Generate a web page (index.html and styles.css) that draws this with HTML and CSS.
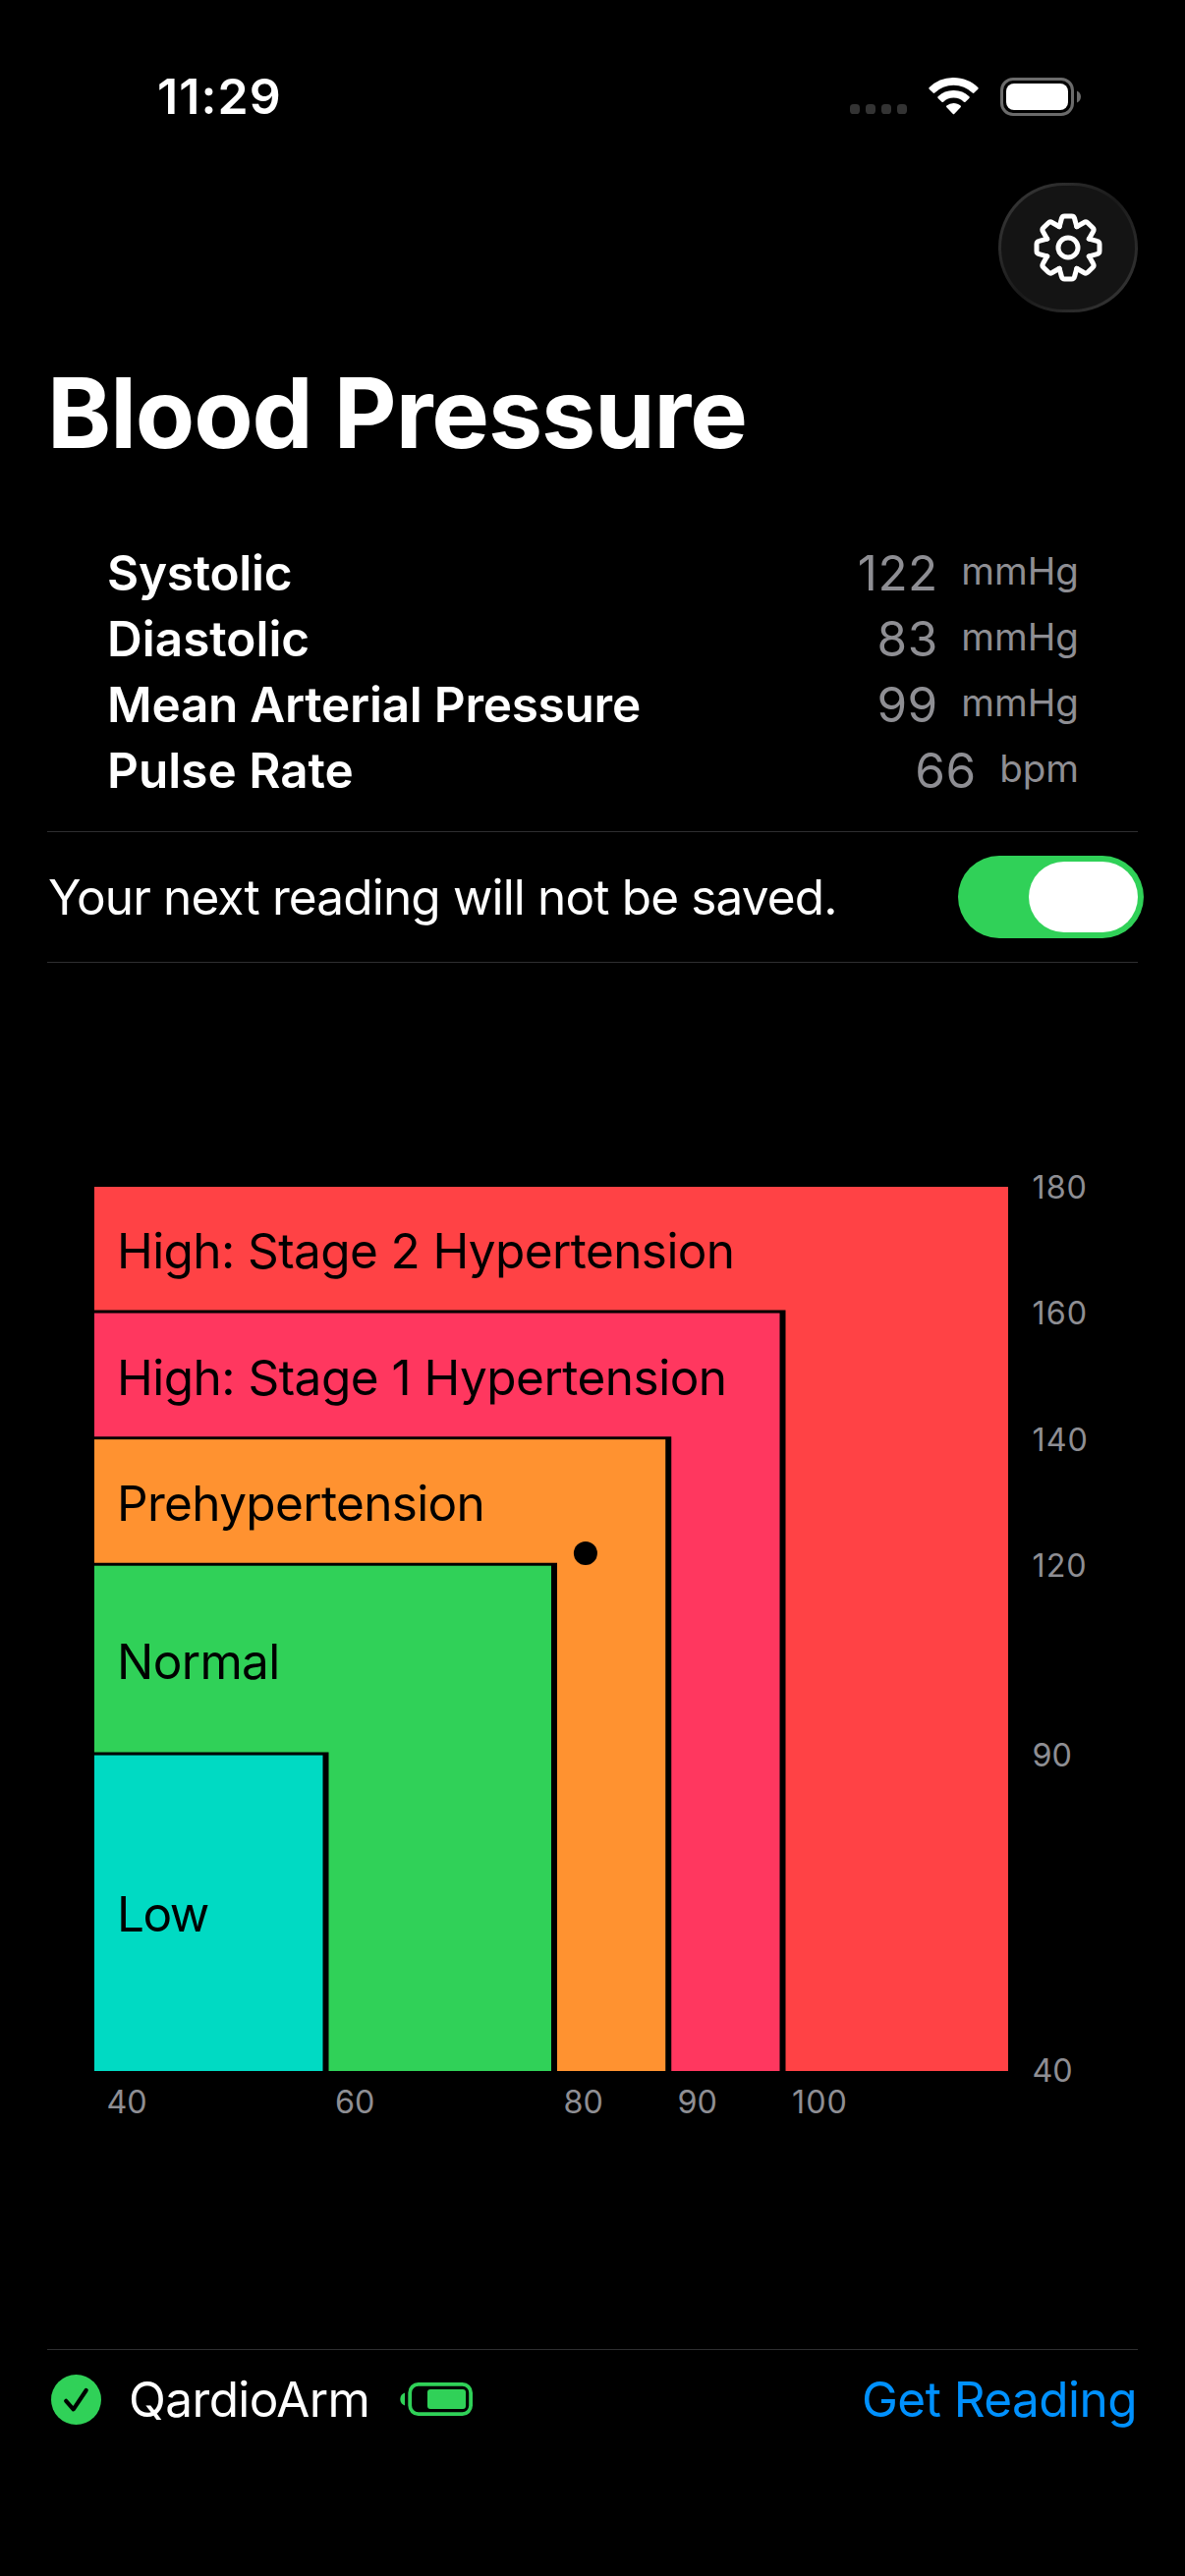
FILE: index.html
```html
<!DOCTYPE html>
<html lang="en">
<head>
<meta charset="utf-8">
<title>Blood Pressure</title>
<link rel="stylesheet" href="styles.css">
</head>
<body>
<div class="screen">
  <header class="status-bar">
    <span class="time">11:29</span>
    <div class="indicators">
      <svg class="signal" width="58" height="38" viewBox="0 0 58 38" fill="#333"><rect x="0" y="27" width="10" height="10" rx="3.6"/><rect x="16" y="27" width="10" height="10" rx="3.6"/><rect x="32" y="27" width="10" height="10" rx="3.6"/><rect x="48" y="27" width="10" height="10" rx="3.6"/></svg>
      <svg class="wifi" width="51" height="38" viewBox="0 0 51 38" fill="#fff"><path d="M25.500 0C35.200 0 44.100 3.800 50.300 10a1.200 1.200 0 0 1 0 1.700L46.400 15.600a1.200 1.200 0 0 1-1.700 0A27.400 27.400 0 0 0 6.300 15.600a1.200 1.200 0 0 1-1.700 0L.7 11.700a1.200 1.200 0 0 1 0-1.700A35 35 0 0 1 25.500 0Z"/><path d="M25.500 13A22.500 22.500 0 0 1 41.400 19.200a1.200 1.200 0 0 1 0 1.700L37.500 24.700a1.200 1.200 0 0 1-1.600 0 15.200 15.200 0 0 0-20.800 0 1.200 1.200 0 0 1-1.600 0L9.600 20.900a1.200 1.200 0 0 1 0-1.700A22.500 22.500 0 0 1 25.500 13Z"/><path d="M25.500 26c2.700 0 5.200 1 7.100 2.600a1.200 1.200 0 0 1 0 1.700L26.400 36.700a1.200 1.200 0 0 1-1.800 0L18.400 30.300a1.200 1.200 0 0 1 0-1.700A11 11 0 0 1 25.500 26Z"/></svg>
      <svg class="battery" width="83" height="39" viewBox="0 0 83 39"><rect x="1.500" y="1.500" width="72" height="36" rx="11.500" fill="none" stroke="#6b6b6b" stroke-width="3"/><rect x="6" y="6" width="63" height="27" rx="8" fill="#fff"/><path d="M78 13.500c2.400 1 4 3.300 4 6s-1.600 5-4 6z" fill="#6b6b6b"/></svg>
    </div>
  </header>
  <div class="toolbar">
    <button class="settings" aria-label="Settings">
      <svg width="72" height="72" viewBox="-36 -36 72 72" fill="none" stroke="#fff" stroke-width="5" stroke-linecap="round" stroke-linejoin="round">
        <defs><path id="tooth" d="M-8.800-21.300-6.600-29.500Q-6-32-3.500-32H3.500Q6-32 6.600-29.500L8.800-21.300"/></defs>
        <use href="#tooth"/><use href="#tooth" transform="rotate(45)"/><use href="#tooth" transform="rotate(90)"/><use href="#tooth" transform="rotate(135)"/><use href="#tooth" transform="rotate(180)"/><use href="#tooth" transform="rotate(225)"/><use href="#tooth" transform="rotate(270)"/><use href="#tooth" transform="rotate(315)"/>
        <circle r="10"/>
      </svg>
    </button>
  </div>
  <h1 class="title">Blood Pressure</h1>
  <dl class="vitals">
    <div class="vital"><dt class="tight">Systolic</dt><dd><span class="value">122</span><span class="unit">mmHg</span></dd></div>
    <div class="vital"><dt>Diastolic</dt><dd><span class="value">83</span><span class="unit">mmHg</span></dd></div>
    <div class="vital"><dt class="tight">Mean Arterial Pressure</dt><dd><span class="value">99</span><span class="unit">mmHg</span></dd></div>
    <div class="vital"><dt>Pulse Rate</dt><dd><span class="value">66</span><span class="unit">bpm</span></dd></div>
  </dl>
  <div class="save-row">
    <span class="notice">Your next reading will not be saved.</span>
    <span class="switch" role="switch" aria-checked="true"><span class="knob"></span></span>
  </div>
  <svg class="chart" width="1110" height="1000" viewBox="0 0 1110 1000">
    <g transform="translate(48 28)">
      <rect class="stage2" width="930" height="900"/>
      <path class="edge" d="M0 125.570H703.500V900H0z"/><rect class="stage1" y="128.570" width="697.500" height="771.430"/>
      <path class="edge" d="M0 254.140H587.250V900H0z"/><rect class="pre" y="257.140" width="581.250" height="642.860"/>
      <path class="edge" d="M0 382.710H471V900H0z"/><rect class="normal" y="385.710" width="465" height="514.290"/>
      <path class="edge" d="M0 575.570H238.500V900H0z"/><rect class="low" y="578.570" width="232.500" height="321.430"/>
      <circle cx="499.900" cy="372.900" r="12"/>
      <g class="zone">
        <text class="zone-stage2" x="23" y="82.800">High: Stage 2 Hypertension</text>
        <text class="zone-stage1" x="23" y="211.500">High: Stage 1 Hypertension</text>
        <text x="23" y="340">Prehypertension</text>
        <text x="23" y="500.600">Normal</text>
        <text class="zone-low" x="23" y="758">Low</text>
      </g>
      <g class="axis">
        <text class="wide" x="954.500" y="11.500">180</text><text class="wide" x="954.500" y="140">160</text><text class="wide" x="954.500" y="268.600">140</text><text class="wide" x="954.500" y="397">120</text><text x="954.500" y="590">90</text><text x="954.500" y="911">40</text>
        <text x="12.500" y="943">40</text><text x="245" y="943">60</text><text x="477.500" y="943">80</text><text x="593.500" y="943">90</text><text class="wide" x="710" y="943">100</text>
      </g>
    </g>
  </svg>
  <footer class="device-bar">
    <svg class="check" width="51" height="51" viewBox="0 0 51 51"><circle cx="25.500" cy="25.500" r="25.500" fill="#30d158"/><path d="M15.200 26.800 22.700 35.300 35.700 16" fill="none" stroke="#000" stroke-width="4.200" stroke-linecap="round" stroke-linejoin="round"/></svg>
    <span class="device">QardioArm</span>
    <svg class="arm-battery" width="75" height="34" viewBox="0 0 75 34"><path d="M5 10.500C2.200 11.300.3 13.800.3 17s1.900 5.700 4.700 6.500z" fill="#30d158"/><rect x="10.200" y="1.900" width="61.900" height="30.200" rx="8.500" fill="none" stroke="#30d158" stroke-width="3.800"/><rect x="28" y="7" width="39" height="20" rx="3" fill="#30d158"/></svg>
    <a class="action" href="#">Get Reading</a>
  </footer>
</div>
</body>
</html>
```
FILE: styles.css
```css
* { box-sizing: border-box; }
body { margin: 0; background: #000; color: #fff; font-family: Inter, "Liberation Sans", sans-serif; font-size: 49.5px; }
.screen { width: 1206px; height: 2622px; padding: 62px 48px 0; display: flex; flex-direction: column; }
.status-bar { height: 72px; flex: none; display: flex; align-items: center; justify-content: space-between; padding: 0 57px 0 112px; }
.time { font-size: 50px; font-weight: 600; line-height: 72px; letter-spacing: 1.1px; }
.indicators { display: flex; align-items: center; }
.wifi { margin-left: 22px; }
.battery { margin-left: 22px; }
.toolbar { margin-top: 52px; display: flex; justify-content: flex-end; }
.settings { width: 142px; height: 132px; padding: 0; border: 3px solid transparent; border-radius: 66px; background: linear-gradient(#141414, #141414) padding-box, linear-gradient(135deg, #3c3c3c, #1a1a1a 50%, #3a3a3a) border-box; display: flex; align-items: center; justify-content: center; }
.title { margin: 42px 0 0; font-size: 98.6px; font-weight: 700; line-height: 120px; letter-spacing: -1.09px; white-space: nowrap; }
.vitals { margin: 70px 0 0; padding: 0 60px; }
.vital { height: 67px; line-height: 67px; display: flex; justify-content: space-between; }
.vital dt { padding-left: 1px; font-weight: 600; }
.vital .tight { letter-spacing: -0.26px; }
.vital dd { margin: 0; display: flex; align-items: center; color: #8e8e93; }
.value { letter-spacing: 0.5px; }
.unit { margin-left: 23.5px; font-size: 38.5px; line-height: 63px; padding-bottom: 4px; }
.save-row { margin-top: 28px; height: 134px; flex: none; border-top: 1px solid #2e2e30; border-bottom: 1px solid #2e2e30; display: flex; align-items: center; justify-content: space-between; }
.notice { padding-left: 1px; letter-spacing: -0.85px; }
.switch { width: 189px; height: 84px; margin-right: -6px; padding: 6px; border-radius: 42px; background: #30d158; display: flex; justify-content: flex-end; }
.knob { width: 111px; border-radius: 36px; background: #fff; }
.chart { flex: none; margin-top: 200px; }
.stage2 { fill: #ff4245; }
.stage1 { fill: #ff375f; }
.pre { fill: #ff9230; }
.normal { fill: #30d158; }
.low { fill: #00dac3; }
.zone { letter-spacing: -0.66px; }
.zone-stage2 { letter-spacing: -0.6px; }
.zone-stage1 { letter-spacing: -0.52px; }
.zone-low { letter-spacing: -1.5px; }
.axis { fill: #8e8e93; font-size: 32.3px; }
.wide { letter-spacing: 1px; }
.device-bar { margin-top: 211px; height: 101px; flex: none; border-top: 1px solid #2e2e30; display: flex; align-items: center; padding-left: 4px; }
.device { width: 245px; margin-left: 28px; letter-spacing: -0.6px; }
.arm-battery { margin-left: 31px; }
.action { margin-left: auto; padding-right: 1px; color: #0091ff; letter-spacing: -0.55px; text-decoration: none; }
```
